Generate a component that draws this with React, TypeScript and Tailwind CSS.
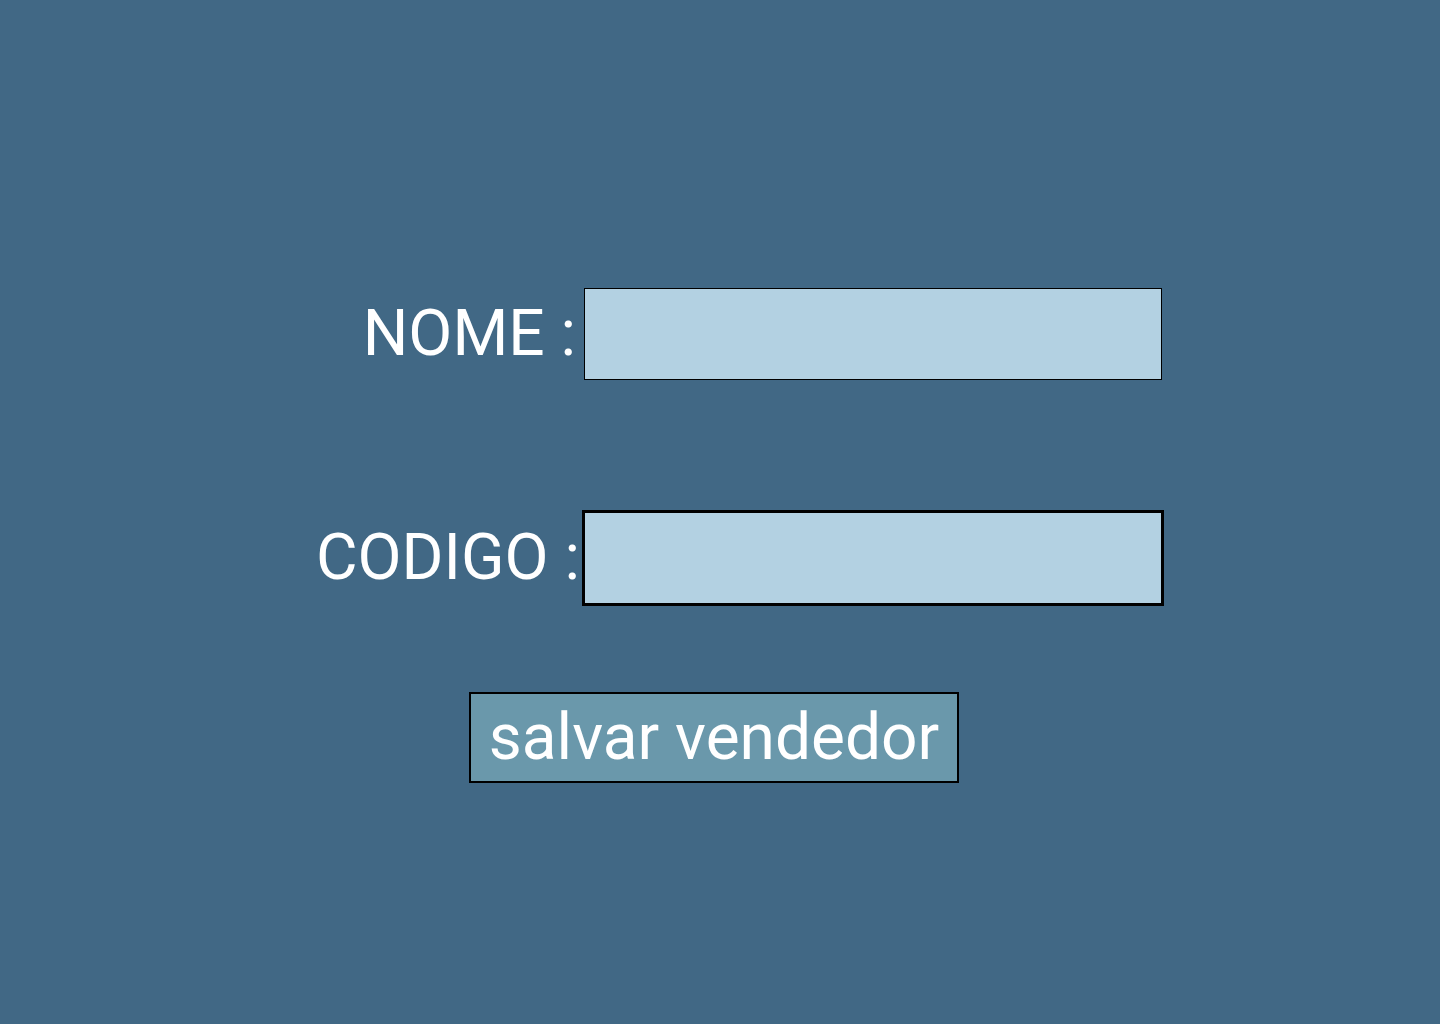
export default function App() {
  return (
    <div className="min-h-screen w-full bg-[#416885] font-['Roboto',sans-serif] text-white">
      <div className="flex flex-col pt-[288px]">
        <div className="flex items-center">
          <label className="w-[576px] text-right text-[64px] leading-none">NOME :</label>
          <input
            type="text"
            className="ml-[8px] h-[92px] w-[578px] border border-black bg-[#b3d1e2] px-2 text-[40px] text-black outline-none"
          />
        </div>
        <div className="mt-[132px] flex items-center">
          <label className="ml-[4px] w-[576px] text-right text-[64px] leading-none">CODIGO :</label>
          <input
            type="text"
            className="ml-[4px] h-[92px] w-[578px] border border-black bg-[#b3d1e2] px-2 text-[40px] text-black outline-2 outline-black"
          />
        </div>
        <div className="mt-[88px] pl-[469px]">
          <button className="h-[91px] w-[490px] border-2 border-black bg-[#6a98ab] text-[64px] leading-none text-white">
            salvar vendedor
          </button>
        </div>
      </div>
    </div>
  );
}
